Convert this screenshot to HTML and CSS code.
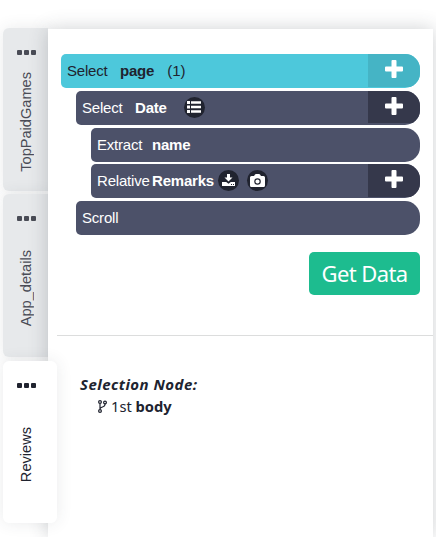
FILE: index.html
```html
<!DOCTYPE html>
<html lang="en">
<head>
<meta charset="utf-8">
<title>Templates</title>
<link rel="stylesheet" href="styles.css">
</head>
<body>
<div class="app">
  <nav class="tabs">
    <div class="tab"><div class="dots"><i></i><i></i><i></i></div><div class="label"><span>TopPaidGames</span></div></div>
    <div class="tab"><div class="dots"><i></i><i></i><i></i></div><div class="label"><span>App_details</span></div></div>
    <div class="tab active"><div class="dots"><i></i><i></i><i></i></div><div class="label"><span>Reviews</span></div></div>
  </nav>
  <main class="panel">
    <div class="commands">
      <div class="row root"><span class="verb">Select</span><b>page</b><span class="count">(1)</span>
        <div class="add"><svg width="18" height="18" viewBox="0 0 18 18"><path d="M7.5 0h3q1 0 1 1v5.500H17q1 0 1 1v3q0 1-1 1h-5.500V17q0 1-1 1h-3q-1 0-1-1v-5.500H1q-1 0-1-1v-3q0-1 1-1h5.500V1q0-1 1-1z"/></svg></div></div>
      <div class="row level1 select"><span class="verb">Select</span><b>Date</b>
        <span class="badge list"><svg width="14" height="12" viewBox="0 0 14 12"><path d="M0 0h3v3H0zM0 4.500h3v3H0zM0 9h3v3H0zM4 0.300h10v2.400H4zM4 4.800h10v2.400H4zM4 9.300h10v2.400H4z"/></svg></span>
        <div class="add"><svg width="18" height="18" viewBox="0 0 18 18"><path d="M7.5 0h3q1 0 1 1v5.500H17q1 0 1 1v3q0 1-1 1h-5.500V17q0 1-1 1h-3q-1 0-1-1v-5.500H1q-1 0-1-1v-3q0-1 1-1h5.500V1q0-1 1-1z"/></svg></div></div>
      <div class="row level2"><span class="verb">Extract</span><b>name</b></div>
      <div class="row level2 relative"><span class="verb">Relative</span><b>Remarks</b>
        <span class="badge"><svg width="13" height="12" viewBox="0 0 13 12"><path d="M5 0h3v3.500H10.500L6.500 7.500 2.500 3.500H5zM0 8h4.200L6.500 9.800 8.800 8H13V12H0z"/><path class="hole" d="M9 10h1v1H9zM11 10h1v1h-1z"/></svg></span>
        <span class="badge camera"><svg width="15" height="13" viewBox="0 0 15 13"><path d="M1.500 2H4l1-1.500Q5.300 0 6 0h3q.7 0 1 .5L11 2h2.500Q15 2 15 3.500v8q0 1.500-1.500 1.500h-12Q0 13 0 11.500v-8Q0 2 1.500 2z"/><circle class="ring" cx="7.500" cy="7.500" r="2.700"/></svg></span>
        <div class="add"><svg width="18" height="18" viewBox="0 0 18 18"><path d="M7.5 0h3q1 0 1 1v5.500H17q1 0 1 1v3q0 1-1 1h-5.500V17q0 1-1 1h-3q-1 0-1-1v-5.500H1q-1 0-1-1v-3q0-1 1-1h5.500V1q0-1 1-1z"/></svg></div></div>
      <div class="row level1 scroll"><span class="verb">Scroll</span></div>
      <button class="get-data">Get Data</button>
    </div>
    <section class="selection">
      <h2>Selection Node:</h2>
      <div class="node"><svg width="9" height="13" viewBox="0 0 9 13"><path d="M2 3.500v6M7 3.500v1Q7 6.200 5 6.800L2.800 7.700Q2 8.200 2 9.500"/><circle cx="2" cy="2" r="1.400"/><circle cx="7" cy="2.500" r="1.400"/><circle cx="2" cy="11" r="1.400"/></svg><span>1st <b>body</b></span></div>
    </section>
  </main>
</div>
</body>
</html>
```
FILE: styles.css
```css
* { box-sizing: border-box; }
body { margin: 0; background: #fff; overflow: hidden; }
.app { display: flex; height: 537px; padding: 28px 3px 0; font: 15px "Liberation Sans", Arial, sans-serif; color: #20232f; }
.tabs { width: 45px; flex: none; display: flex; flex-direction: column; gap: 3px; }
.tab {
  height: 163px; padding-top: 22px; border-radius: 6px 0 0 6px; color: #4a4c56;
  background: #e7e9eb;
  box-shadow: 0 0 16px rgba(50, 60, 65, .1);
}
.tab.active {
  position: relative; z-index: 1; width: 54px; height: 162px; margin-top: 1px;
  border-radius: 6px; background: #fff; color: #20232f;
}
.dots { display: flex; gap: 2px; margin-left: 14px; }
.dots i { width: 5px; height: 5px; border-radius: 1px; background: currentColor; }
.label { display: flex; align-items: center; justify-content: center; width: 45px; height: 134px; }
.label span { writing-mode: vertical-rl; transform: rotate(180deg); font-size: 14.600px; line-height: 18px; }
.panel { flex: none; width: 385px; margin-top: 1px; background: #fff; box-shadow: 0 0 18px rgba(50, 60, 65, .24); }
.commands {
  height: 307px; margin-left: 9px; padding: 25px 13px 0 4px; border-bottom: 1px solid #dcdddd;
  display: flex; flex-direction: column;
}
.row {
  height: 34px; flex: none; display: flex; align-items: center; padding-left: 6px;
  margin-bottom: 3px; overflow: hidden; border-radius: 5px 15px 15px 5px;
  background: #4c5169; color: #fff; font-size: 15px; white-space: pre;
}
.verb, .row b, .count { margin-top: -2px; }
.verb { flex: none; width: 53px; letter-spacing: -.2px; }
.row b { letter-spacing: -.2px; }
.root { background: #4dc8db; color: #20232f; }
.root .count { margin-left: 13px; }
.level1 { margin-left: 15px; }
.level2 { margin-left: 30px; }
.level2 .verb { width: 55px; }
.level2:not(.relative) { margin-bottom: 2px; }
.add { align-self: flex-start; margin-left: auto; width: 52px; height: 33px; background: #35384b; display: flex; justify-content: center; padding: 6px 0 0; }
.select .add { height: 32px; }
.root .add { background: #45b4c5; }
svg { fill: #fff; flex: none; display: block; }
.badge { width: 21px; height: 21px; border-radius: 50%; background: #20232f; display: flex; align-items: center; justify-content: center; margin-left: 4px; margin-top: -2px; }
.badge.list { margin-left: 17px; }
.badge.camera { margin-left: 8px; }
.hole { fill: #20232f; }
.ring { fill: #fff; stroke: #20232f; stroke-width: 1.200; }
.get-data {
  align-self: flex-end; margin-top: 14px; width: 111px; height: 43px; flex: none; padding: 0 0 1px;
  border: 0; border-radius: 5px; background: #1dbc8f; color: #fff; font: 22px "Noto Sans", sans-serif; letter-spacing: -.6px;
}
.selection { padding: 37px 0 0 32px; font: 15px/22px "Noto Sans", sans-serif; }
.selection h2 { margin: 0; font-size: 15px; line-height: 22px; font-style: italic; font-weight: 700; letter-spacing: .47px; }
.node { display: flex; align-items: center; gap: 4px; margin-left: 18px; font-size: 14.700px; }
.node svg { fill: none; stroke: #20232f; stroke-width: 1.200; }
```
